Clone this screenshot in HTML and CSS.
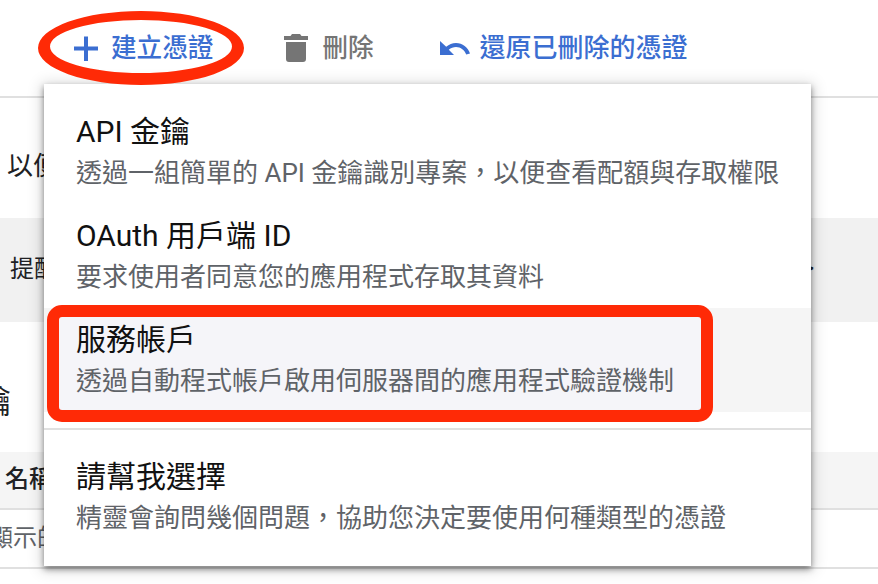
FILE: index.html
```html
<!DOCTYPE html>
<html lang="zh-Hant">
<head>
<meta charset="utf-8">
<title>憑證</title>
<link rel="stylesheet" href="styles.css">
</head>
<body>
<div class="page">
  <header class="toolbar">
    <button class="tool tool-create">
      <svg class="icon-plus" viewBox="0 0 24 24"><path d="M10 0h4v10h10v4H14v11h-4V14H0v-4h10z"/></svg>
      <span>建立憑證</span>
    </button>
    <button class="tool tool-delete">
      <svg class="icon-trash" viewBox="0 0 24 28"><path d="M8 0h8l1.5 2H24v4H0V2h6.5zM2 8h20v17a3 3 0 0 1-3 3H5a3 3 0 0 1-3-3z"/></svg>
      <span>刪除</span>
    </button>
    <button class="tool tool-restore">
      <svg class="icon-undo" viewBox="0 0 30 16"><path d="M0 1v14h14l-5.200-5.200C10.800 8 13.400 7 16 7c4.800 0 8.700 3.200 10.200 7.600L30 13.400C28 7.600 22.500 3 16 3c-3.700 0-7 1.400-9.800 3.800z"/></svg>
      <span>還原已刪除的憑證</span>
    </button>
  </header>

  <section class="intro"><p>以便查看配額</p></section>
  <section class="notice"><p>提醒您</p><span class="notice-end">&gt;</span></section>
  <section class="heading"><h2>金鑰</h2></section>
  <section class="table-head"><span>名稱</span></section>
  <section class="table-row"><span>顯示的</span></section>

  <div class="menu">
    <div class="menu-item">
      <div class="item-title">API 金鑰</div>
      <div class="item-sub">透過一組簡單的 API 金鑰識別專案，以便查看配額與存取權限</div>
    </div>
    <div class="menu-item">
      <div class="item-title">OAuth 用戶端 ID</div>
      <div class="item-sub">要求使用者同意您的應用程式存取其資料</div>
    </div>
    <div class="menu-item is-hover">
      <div class="item-title">服務帳戶</div>
      <div class="item-sub">透過自動程式帳戶啟用伺服器間的應用程式驗證機制</div>
    </div>
    <div class="menu-divider"></div>
    <div class="menu-item">
      <div class="item-title">請幫我選擇</div>
      <div class="item-sub">精靈會詢問幾個問題，協助您決定要使用何種類型的憑證</div>
    </div>
  </div>

  <svg class="mark-ellipse" viewBox="0 0 206 74"><path fill-rule="evenodd" d="M0 37a103 37 0 1 0 206 0a103 37 0 1 0-206 0zM12 35.500a91 26.500 0 1 1 182 0a91 26.500 0 1 1-182 0z"/></svg>
  <div class="mark-rect"></div>
</div>
</body>
</html>
```
FILE: styles.css
```css
* { box-sizing: border-box; }
html, body { margin: 0; padding: 0; }
body {
  background: #fff;
  font-family: Roboto, "Noto Sans CJK TC", sans-serif;
  color: #202124;
}
.page {
  position: relative;
  width: 878px;
  height: 584px;
  overflow: hidden;
}
.toolbar {
  height: 98px;
  border-bottom: 2px solid #e0e0e0;
  padding: 29px 0 0 74px;
  display: flex;
  align-items: flex-start;
}
.tool {
  display: flex;
  align-items: center;
  height: 38px;
  padding: 0;
  border: 0;
  background: none;
  font: 500 25.6px/38px Roboto, "Noto Sans CJK TC", sans-serif;
  color: #3b6ed1;
  white-space: nowrap;
}
.tool svg { fill: currentColor; display: block; flex: none; }
.icon-plus { width: 24px; height: 25px; margin-right: 13px; }
.icon-trash { width: 24px; height: 28px; margin-right: 14px; }
.icon-undo { width: 30px; height: 16px; margin-right: 10px; }
.tool-delete { margin-left: 71px; color: #757575; }
.tool-restore { margin-left: 66px; font-size: 26px; }

.intro { height: 120px; padding: 48px 0 0 7px; }
.intro p { margin: 0; font-size: 26px; line-height: 40px; }
.notice p { margin: 0; font-size: 24px; line-height: 40px; }
.notice {
  height: 104px;
  background: #f1f1f1;
  padding: 31px 64px 0 10px;
  display: flex;
  justify-content: space-between;
}
.notice-end { font-size: 24px; line-height: 38px; }
.heading { height: 130px; padding: 58px 0 0; overflow: hidden; }
.heading h2 {
  margin: 0 0 0 -53px;
  font-size: 32px;
  font-weight: 400;
  line-height: 44px;
}
.table-head {
  height: 58px;
  background: #f5f5f5;
  border-bottom: 2px solid #e0e0e0;
  padding: 8px 0 0 5px;
  font-size: 24px;
  font-weight: 500;
  line-height: 38px;
}
.table-row {
  height: 59px;
  border-bottom: 2px solid #e0e0e0;
  padding: 9px 0 0;
  margin-left: -11px;
  font-size: 24px;
  line-height: 38px;
  color: #5f6368;
}

.menu {
  position: absolute;
  left: 44px;
  top: 84px;
  width: 767px;
  height: 482px;
  padding: 16px 0;
  background: #fff;
  box-shadow: 0 3px 6px rgba(0,0,0,.45), 0 2px 14px 3px rgba(0,0,0,.14);
}
.menu-item {
  height: 104px;
  padding: 12px 32px 0;
}
.menu-item.is-hover {
  position: relative;
  z-index: 0;
  background: #f5f5f5;
}
.menu-item.is-hover::before {
  content: "";
  position: absolute;
  z-index: -1;
  left: 15px;
  top: 9px;
  width: 642px;
  height: 93px;
  background: #f5f5f9;
}
.item-title {
  font-size: 30px;
  line-height: 40px;
  color: #111;
  white-space: nowrap;
}
.item-sub {
  font-size: 26px;
  line-height: 40px;
  padding-top: 1px;
  color: #5f6368;
  white-space: nowrap;
}
.menu-divider {
  height: 2px;
  margin: 16px 0 15px;
  background: #e0e0e0;
}

.mark-ellipse {
  position: absolute;
  left: 38px;
  top: 11px;
  width: 206px;
  height: 74px;
  fill: #ff2a06;
}
.mark-rect {
  position: absolute;
  left: 47px;
  top: 305px;
  width: 666px;
  height: 117px;
  border: 12px solid #ff2a06;
  border-radius: 15px;
}
```
